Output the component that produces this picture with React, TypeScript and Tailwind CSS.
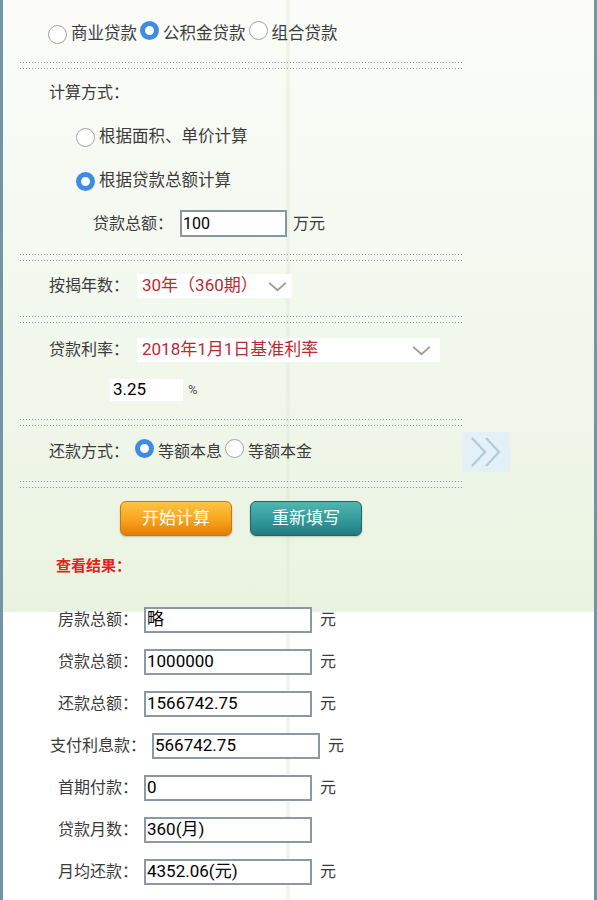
const font = { fontFamily: 'Roboto, "Noto Sans CJK SC", "Noto Sans", sans-serif' };

function Radio({ checked }: { checked?: boolean }) {
  if (checked) {
    return <span className="inline-block h-[19px] w-[19px] shrink-0 rounded-full border-[5px] border-[#3f8ae4] bg-white" />;
  }
  return <span className="inline-block h-[19px] w-[19px] shrink-0 rounded-full border-[1.5px] border-[#a3a3a3] bg-white" />;
}

function Dotted({ mt }: { mt: string }) {
  return (
    <div className={`ml-[17px] flex w-[442px] flex-col gap-[5px] ${mt}`}>
      <div className="h-px bg-[linear-gradient(to_right,#869898_1px,transparent_1px)] bg-[length:3px_1px]" />
      <div className="h-px bg-[linear-gradient(to_right,#869898_1px,transparent_1px)] bg-[length:3px_1px]" />
    </div>
  );
}

function Chevron({ className }: { className?: string }) {
  return (
    <svg viewBox="0 0 22 12" className={className} fill="none" stroke="#9a9a9a" strokeWidth="2">
      <polyline points="2,2 11,10 20,2" />
    </svg>
  );
}

const results = [
  { label: "房款总额：", value: "略", unit: "元", pl: "pl-[55px]" },
  { label: "贷款总额：", value: "1000000", unit: "元", pl: "pl-[55px]" },
  { label: "还款总额：", value: "1566742.75", unit: "元", pl: "pl-[55px]" },
  { label: "支付利息款：", value: "566742.75", unit: "元", pl: "pl-[47px]" },
  { label: "首期付款：", value: "0", unit: "元", pl: "pl-[55px]" },
  { label: "贷款月数：", value: "360(月)", unit: "", pl: "pl-[55px]" },
  { label: "月均还款：", value: "4352.06(元)", unit: "元", pl: "pl-[55px]" },
];

export default function App() {
  return (
    <div
      style={font}
      className="min-h-[900px] w-full overflow-hidden border-x-[3px] border-[#7394a4] bg-[linear-gradient(to_right,transparent_283px,#dde9d266_283px,#dde9d266_287px,transparent_287px),linear-gradient(to_bottom,#fbfcf9_0px,#f3f8ee_300px,#eaf3e1_612px,#ffffff_612px)] pb-[20px] text-[16.5px] text-[#3b3b3b]"
    >
      {/* loan type */}
      <div className="mt-[22px] flex h-[24px] items-center pl-[45px]">
        <Radio />
        <span className="ml-[4px]">商业贷款</span>
        <span className="ml-[3px]"><Radio checked /></span>
        <span className="ml-[4px]">公积金贷款</span>
        <span className="ml-[3px]"><Radio /></span>
        <span className="ml-[4px]">组合贷款</span>
      </div>

      <Dotted mt="mt-[16px]" />

      <div className="mt-[12px] flex h-[24px] items-center pl-[46px] text-[16px]">计算方式：</div>

      <div className="mt-[20px] flex h-[24px] items-center pl-[73px]">
        <Radio />
        <span className="ml-[4px]">根据面积、单价计算</span>
      </div>

      <div className="mt-[20px] flex h-[24px] items-center pl-[73px]">
        <Radio checked />
        <span className="ml-[4px]">根据贷款总额计算</span>
      </div>

      <div className="mt-[17px] flex h-[27px] items-center pl-[90px] text-[16px]">
        <span>贷款总额：</span>
        <span className="ml-[7px] flex h-[27px] w-[107px] items-center border-2 border-[#8797a3] bg-white pl-[1px] text-black">100</span>
        <span className="ml-[6px]">万元</span>
      </div>

      <Dotted mt="mt-[17px]" />

      <div className="mt-[13px] flex h-[24px] items-center pl-[46px] text-[16px]">
        <span>按揭年数：</span>
        <span className="ml-[8px] flex h-[24px] w-[155px] items-center bg-white pl-[5px] text-[17px] text-[#bb2a2e]">
          30年（360期）
          <Chevron className="ml-auto mr-[4px] h-[11px] w-[21px]" />
        </span>
      </div>

      <Dotted mt="mt-[18px]" />

      <div className="mt-[15px] flex h-[24px] items-center pl-[46px] text-[16px]">
        <span>贷款利率：</span>
        <span className="ml-[8px] flex h-[24px] w-[303px] items-center bg-white pl-[5px] text-[17px] text-[#bb2a2e]">
          2018年1月1日基准利率
          <Chevron className="ml-auto mr-[8px] h-[11px] w-[21px]" />
        </span>
      </div>

      <div className="mt-[17px] flex h-[22px] items-center pl-[107px]">
        <span className="flex h-[22px] w-[73px] items-center bg-white pl-[3px] text-[17px] text-black">3.25</span>
        <span className="ml-[5px] text-[13px] text-[#555]">%</span>
      </div>

      <Dotted mt="mt-[18px]" />

      <div className="mt-[6px] flex h-[40px] items-center pl-[46px] text-[16px]">
        <span>还款方式：</span>
        <span className="ml-[6px]"><Radio checked /></span>
        <span className="ml-[4px]">等额本息</span>
        <span className="ml-[3px]"><Radio /></span>
        <span className="ml-[4px]">等额本金</span>
        <span className="ml-[151px] flex h-[40px] w-[47px] items-center justify-center bg-[#e3f0f7]">
          <svg viewBox="0 0 40 34" className="h-[34px] w-[40px]" fill="none" stroke="#b3cad7" strokeWidth="2.2">
            <polyline points="5,3 18,17 5,31" />
            <polyline points="19,3 32,17 19,31" />
          </svg>
        </span>
      </div>

      <Dotted mt="mt-[9px]" />

      <div className="mt-[13px] flex h-[35px] items-center gap-[18px] pl-[117px] text-[17px] text-white">
        <button className="h-[35px] w-[112px] rounded-[6px] border border-[#cf7610] bg-[linear-gradient(to_bottom,#fdc444,#f6a41c_55%,#e47c06)] shadow-[0_1px_2px_#0003]">
          开始计算
        </button>
        <button className="h-[35px] w-[112px] rounded-[6px] border border-[#1c6468] bg-[linear-gradient(to_bottom,#52b5b0,#339a9b_55%,#237b82)] shadow-[0_1px_2px_#0003]">
          重新填写
        </button>
      </div>

      <div className="mt-[20px] flex h-[20px] items-center pl-[53px] text-[15px] font-bold text-[#e0231d]">查看结果：</div>

      <div className="mt-[31px] flex flex-col gap-[16px] text-[16px]">
        {results.map((r) => (
          <div key={r.label} className={`flex h-[26px] items-center ${r.pl}`}>
            <span>{r.label}</span>
            <span className="ml-[6px] flex h-[26px] w-[168px] items-center border-2 border-[#8a99a5] bg-white pl-[1px] text-[17px] text-black">
              {r.value}
            </span>
            <span className={`ml-[8px] ${r.unit ? "" : "invisible"}`}>元</span>
          </div>
        ))}
      </div>
    </div>
  );
}
